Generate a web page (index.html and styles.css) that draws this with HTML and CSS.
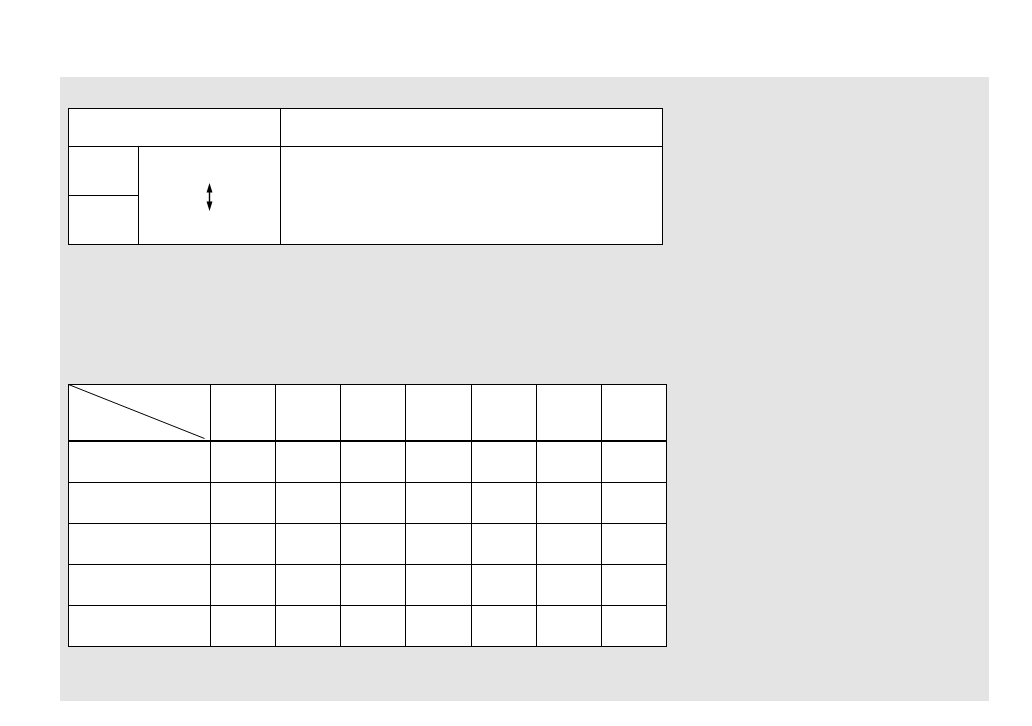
FILE: index.html
```html
<!DOCTYPE html>
<html>
<head>
<meta charset="utf-8">
<link rel="stylesheet" href="styles.css">
</head>
<body>
<div class="panel">
  <div class="grid-a">
    <div class="cell a-top-left"></div>
    <div class="cell a-top-right"></div>
    <div class="cell a-mid-left"></div>
    <div class="cell a-bot-left"></div>
    <div class="cell a-arrow">
      <svg width="7" height="28" viewBox="0 0 7 28">
        <line x1="3.5" y1="8" x2="3.5" y2="20" stroke="#000" stroke-width="1.4"/>
        <polygon points="3.5,0 6.5,9.5 0.5,9.5" fill="#000"/>
        <polygon points="3.5,28 6.5,18.5 0.5,18.5" fill="#000"/>
      </svg>
    </div>
    <div class="cell a-right"></div>
  </div>

  <div class="grid-b">
    <div class="cell head corner">
      <svg width="141" height="55" viewBox="0 0 141 55">
        <line x1="-0.5" y1="-0.5" x2="135.5" y2="53.5" stroke="#000" stroke-width="1"/>
      </svg>
    </div>
    <div class="cell head"></div>
    <div class="cell head"></div>
    <div class="cell head"></div>
    <div class="cell head"></div>
    <div class="cell head"></div>
    <div class="cell head"></div>
    <div class="cell head"></div>

    <div class="cell"></div><div class="cell"></div><div class="cell"></div><div class="cell"></div><div class="cell"></div><div class="cell"></div><div class="cell"></div><div class="cell"></div>
    <div class="cell"></div><div class="cell"></div><div class="cell"></div><div class="cell"></div><div class="cell"></div><div class="cell"></div><div class="cell"></div><div class="cell"></div>
    <div class="cell"></div><div class="cell"></div><div class="cell"></div><div class="cell"></div><div class="cell"></div><div class="cell"></div><div class="cell"></div><div class="cell"></div>
    <div class="cell"></div><div class="cell"></div><div class="cell"></div><div class="cell"></div><div class="cell"></div><div class="cell"></div><div class="cell"></div><div class="cell"></div>
    <div class="cell"></div><div class="cell"></div><div class="cell"></div><div class="cell"></div><div class="cell"></div><div class="cell"></div><div class="cell"></div><div class="cell"></div>
  </div>
</div>
</body>
</html>
```

FILE: styles.css
```css
html, body {
  margin: 0;
  padding: 0;
  background: #ffffff;
  font-family: "Liberation Sans", Arial, sans-serif;
}

.panel {
  margin: 77px 0 0 60px;
  width: 929px;
  height: 624px;
  background: #e4e4e4;
  box-sizing: border-box;
  padding: 31px 0 0 8px;
  display: flex;
  flex-direction: column;
  align-items: flex-start;
}

.cell {
  background: #ffffff;
}

.grid-a {
  display: grid;
  grid-template-columns: 69px 141px 381px;
  grid-template-rows: 37px 48px 48px;
  gap: 1px;
  background: #000;
  border: 1px solid #000;
}

.a-top-left { grid-column: 1 / 3; grid-row: 1; }
.a-top-right { grid-column: 3; grid-row: 1; }
.a-mid-left { grid-column: 1; grid-row: 2; }
.a-bot-left { grid-column: 1; grid-row: 3; }
.a-arrow {
  grid-column: 2;
  grid-row: 2 / 4;
  display: flex;
  align-items: center;
  justify-content: center;
  padding-top: 2px;
}
.a-arrow svg { display: block; }
.a-right { grid-column: 3; grid-row: 2 / 4; }

.grid-b {
  margin-top: 139px;
  display: grid;
  grid-template-columns: 141px repeat(7, 1fr);
  width: 599px;
  grid-template-rows: 56px repeat(5, 40px);
  gap: 1px;
  background: #000;
  border: 1px solid #000;
  box-sizing: border-box;
}

.head {
  border-bottom: 1px solid #000;
}

.corner svg { display: block; }
```
